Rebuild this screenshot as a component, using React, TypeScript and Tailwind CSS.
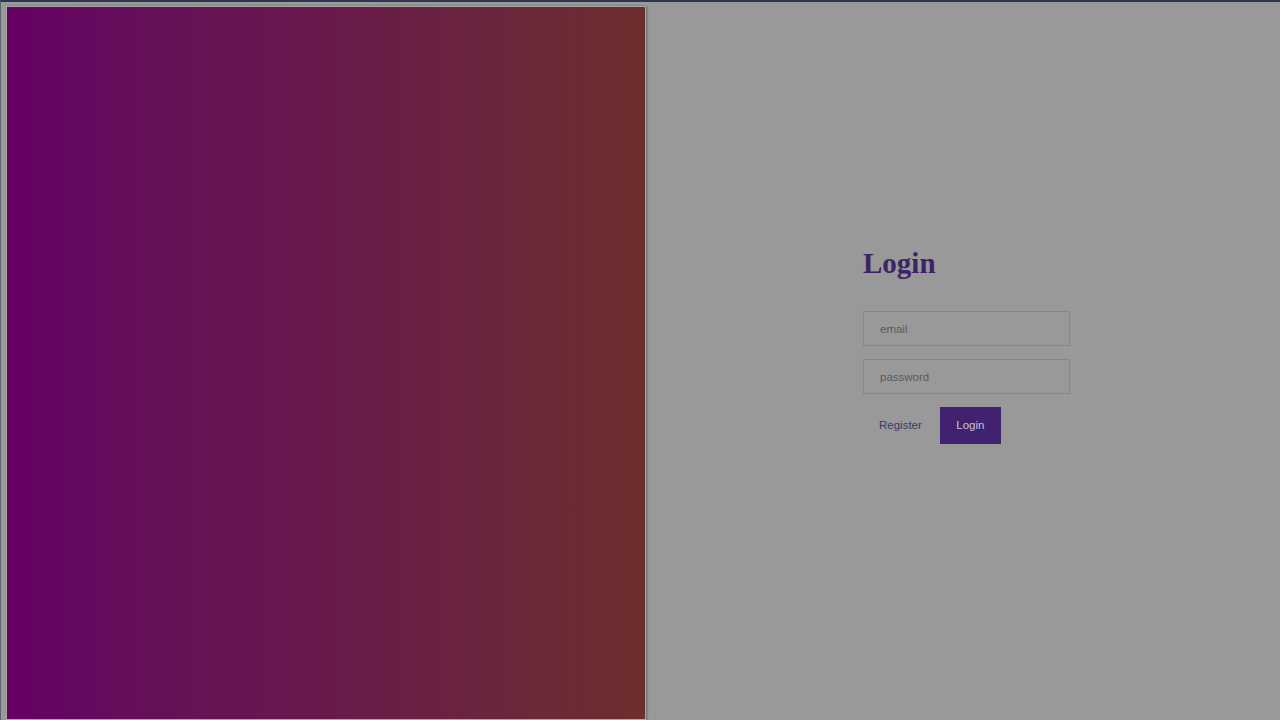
const App = () => {
  return (
    <main className="flex h-screen w-full overflow-hidden bg-[#999999] border-t-2 border-l border-t-[#2b3650] border-l-[#5a6275] font-['Liberation_Sans',Arial,sans-serif]">
      <section className="ml-[5px] mt-[4px] w-[640px] shrink-0 border border-[#a8a8a8] bg-gradient-to-r from-[#640064] via-[#68194a] to-[#6c2e2d] shadow-[1px_0_2px_rgba(0,0,0,0.35)]"></section>

      <section className="flex-1 pl-[217px] pt-[243px]">
        <form className="flex w-[207px] flex-col" onSubmit={(e) => e.preventDefault()}>
          <h1 className="text-[29px] font-bold leading-[36px] text-[#3e2366] font-['Liberation_Serif','Times_New_Roman',serif]">
            Login
          </h1>

          <input
            type="email"
            placeholder="email"
            className="mt-[30px] h-[35px] border border-[#878787] bg-transparent pl-4 text-[11.5px] text-[#444] outline-none placeholder:text-[#595959]"
          />
          <input
            type="password"
            placeholder="password"
            className="mt-[13px] h-[35px] border border-[#878787] bg-transparent pl-4 text-[11.5px] text-[#444] outline-none placeholder:text-[#595959]"
          />

          <div className="mt-[13px] flex gap-[2px]">
            <button type="button" className="h-[37px] px-4 text-[11.5px] text-[#46366a]">
              Register
            </button>
            <button type="submit" className="h-[37px] w-[61px] bg-[#40226e] text-[11.5px] text-[#c9c2d6]">
              Login
            </button>
          </div>
        </form>
      </section>
    </main>
  );
};

export default App;
